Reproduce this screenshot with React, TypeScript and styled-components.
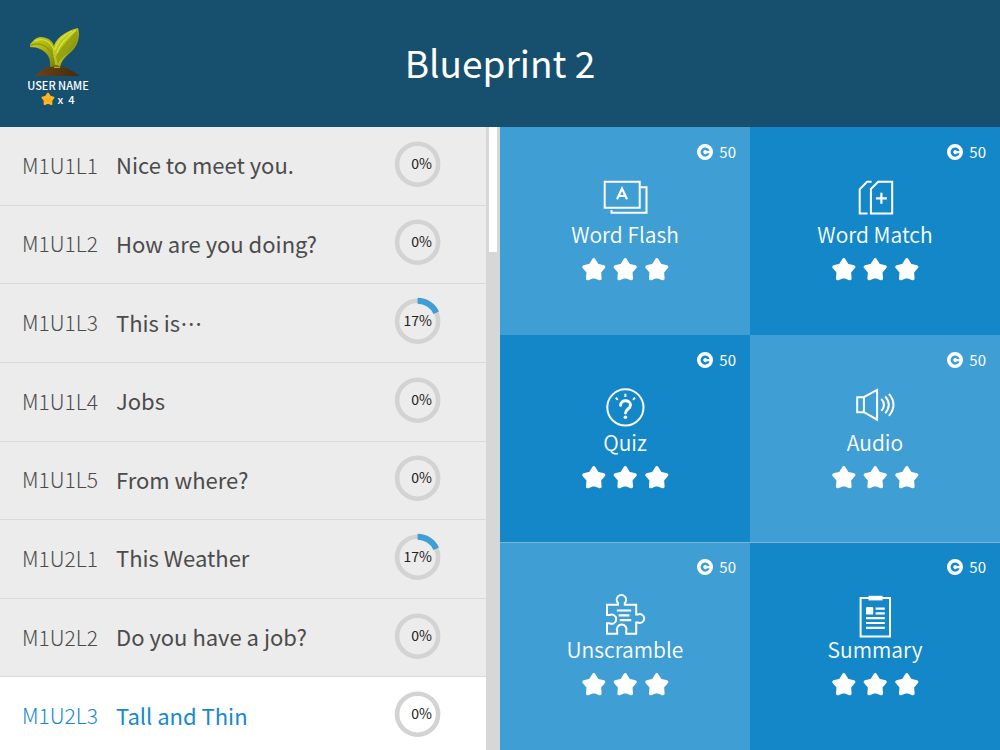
import React from 'react';
import styled, { createGlobalStyle } from 'styled-components';

const GlobalStyle = createGlobalStyle`
  *, *::before, *::after { box-sizing: border-box; }
  body {
    margin: 0;
    font-family: "Noto Sans CJK TC", "Noto Sans", sans-serif;
    color: #4b4b4b;
  }
  button { font: inherit; color: inherit; border: 0; cursor: pointer; }
  ul { list-style: none; margin: 0; padding: 0; }
`;

const Page = styled.div`
  display: flex;
  flex-direction: column;
  height: 100vh;
  overflow: hidden;
`;

const Header = styled.header`
  display: grid;
  grid-template-columns: 1fr auto 1fr;
  align-items: center;
  flex: none;
  height: 127px;
  padding: 0 24px;
  background: #17506f;
  color: #fff;
`;

const Title = styled.h1`
  margin: 0;
  padding-bottom: 4px;
  font-size: 37px;
  line-height: 56px;
  font-weight: 400;
`;

const Profile = styled.div`
  display: flex;
  flex-direction: column;
  align-items: center;
  justify-self: start;
  width: 68px;
  padding-top: 4px;
  font-size: 11px;
  font-weight: 500;
  line-height: 14px;
  white-space: nowrap;
`;

const Score = styled.span`
  display: flex;
  align-items: center;
  gap: 2px;
`;

const Main = styled.main`
  display: grid;
  grid-template-columns: 1fr 1fr;
  flex: 1;
  min-height: 0;
`;

const LessonPanel = styled.section`
  display: grid;
  grid-template-columns: 1fr 14px;
  min-height: 0;
  overflow: hidden;
`;

const LessonList = styled.ul`
  display: grid;
  grid-template-rows: repeat(8, minmax(72px, 1fr));
  height: calc(100% + 6px);
`;

const LessonItem = styled.li`
  display: grid;
  border-bottom: 1px solid #d9d9d9;
`;

const Lesson = styled.button<{ $active?: boolean }>`
  display: grid;
  grid-template-columns: 94px 1fr 46px;
  align-items: center;
  width: 100%;
  padding: 0 45px 4px 22px;
  background: ${p => (p.$active ? '#fff' : '#ececec')};
  color: ${p => (p.$active ? '#1589d0' : '#4b4b4b')};
  font-size: 22px;
  line-height: 32px;
  text-align: left;
`;

const Code = styled.span`
  padding-top: 2px;
  font-size: 21px;
  font-weight: 300;
`;

const Name = styled.span`
  padding-top: 1px;
  font-weight: 400;
`;

const Progress = styled.span`
  display: grid;
  align-items: center;
  width: 46px;
  height: 46px;
  color: #222;
  font-size: 14px;
  line-height: 20px;

  > * { grid-area: 1 / 1; }
`;

const Percent = styled.span`
  padding: 0 9px 2px 0;
  text-align: right;
`;

const ScrollTrack = styled.div`
  padding: 0 3px;
  background: #d7d7d7;
`;

const ScrollThumb = styled.div`
  height: 20%;
  background: #fff;
`;

const Activities = styled.section`
  display: grid;
  grid-template-columns: 1fr 1fr;
  grid-template-rows: repeat(3, 1fr);
`;

const Tile = styled.button<{ $dark?: boolean; $ruled?: boolean }>`
  display: flex;
  flex-direction: column;
  align-items: center;
  justify-content: flex-start;
  padding: 15px 14px 0;
  background: ${p => (p.$dark ? '#1487c8' : '#3f9ed3')};
  box-shadow: ${p => (p.$ruled ? 'inset 0 1px #7fb3d2' : 'none')};
  color: #fff;
`;

const Credit = styled.span`
  display: flex;
  align-items: center;
  align-self: flex-end;
  gap: 6px;
  margin-bottom: 17px;
  font-size: 15px;
  line-height: 20px;
`;

const TileName = styled.span`
  margin-bottom: 12px;
  font-size: 21px;
  font-weight: 350;
  line-height: 22px;
`;

function starPoints(cx: number, cy: number, outer: number, inner: number) {
  return Array.from({ length: 10 }, (_, i) => {
    const r = i % 2 ? inner : outer;
    const a = (i * Math.PI) / 5 - Math.PI / 2;
    return `${(cx + r * Math.cos(a)).toFixed(2)},${(cy + r * Math.sin(a)).toFixed(2)}`;
  }).join(' ');
}

function Stars() {
  return (
    <svg width="88" height="24" viewBox="0 0 88 24" fill="#fff" stroke="#fff" strokeWidth="3.4" strokeLinejoin="round" role="img" aria-label="3 stars">
      {[12.8, 44.2, 75.8].map(x => (
        <polygon key={x} points={starPoints(x, 13.2, 10.4, 5.9)} />
      ))}
    </svg>
  );
}

function Ring({ value }: { value: number }) {
  const length = 2 * Math.PI * 20.5;
  return (
    <svg width="46" height="46" viewBox="0 0 46 46" fill="none" overflow="visible" aria-hidden="true">
      <circle cx="22.6" cy="23.2" r="20.5" stroke="#d3d3d3" strokeWidth="4.6" />
      {value > 0 && (
        <circle cx="22.6" cy="23.2" r="20.5" stroke="#3f9ed3" strokeWidth="6" strokeDasharray={`${(length * (value + 1)) / 100} ${length}`} transform="rotate(-90 22.6 23.2)" />
      )}
    </svg>
  );
}

function CoinIcon() {
  return (
    <svg width="16" height="16" viewBox="0 0 16 16" aria-hidden="true">
      <path fill="#fff" fillRule="evenodd" d="M8 0a8 8 0 1 0 0 16A8 8 0 0 0 8 0ZM12.6 6.9H9.9A2 2 0 1 0 9.9 9.2H12.6A4.6 4.6 0 1 1 12.6 6.9Z" />
    </svg>
  );
}

function Sprout() {
  return (
    <svg width="56" height="52" viewBox="0 0 56 52" aria-hidden="true">
      <defs>
        <linearGradient id="leafRight" x1="0" y1="0" x2="1" y2="1">
          <stop offset="0.2" stopColor="#c3d020" />
          <stop offset="0.55" stopColor="#b4bd17" />
          <stop offset="0.8" stopColor="#6f7a08" />
        </linearGradient>
        <linearGradient id="leafLeft" x1="0" y1="0" x2="1" y2="1">
          <stop offset="0" stopColor="#c9d32b" />
          <stop offset="0.5" stopColor="#a9b312" />
          <stop offset="1" stopColor="#76800a" />
        </linearGradient>
        <linearGradient id="soil" x1="0" y1="0" x2="1" y2="0">
          <stop offset="0" stopColor="#6b4315" />
          <stop offset="1" stopColor="#452b12" />
        </linearGradient>
      </defs>
      <g transform="translate(-4 0)">
        <path d="M9 50C14 45 20 40 29 39.500C39 39.500 46 45 53 49Q53 50 52 50Z" fill="url(#soil)" />
        <path d="M24 41C25 33 22 27 15 23.500C10 21 6 21 1 21C7 16 8 12 14 11C23 11 29 16 29 25C31 31 31 37 30 41Z" fill="url(#leafLeft)" />
        <path d="M28 42C31 36 26 31 27 24C28 13 39 5 52 2C54 9 53 19 45 26C39 31 35 35 34 42Z" fill="url(#leafRight)" />
        <path d="M30 31C34 21 43 14 51 4C54 14 49 21 42 27C37 31 33 34 32 39Z" fill="#7d880c" opacity=".55" />
        <path d="M31 27C34 17 42 10 50 4M29 24C31 15 38 9 46 5" fill="none" stroke="#dbe24c" strokeWidth="1.2" />
        <path d="M3 20C12 15 22 19 27 30" fill="none" stroke="#8d970f" strokeWidth="1.3" />
        <path d="M9 15C18 11 25 16 28 24" fill="none" stroke="#d6de43" strokeWidth="1.2" />
        <path d="M24 41C28 38 31 38 34 41Z" fill="#7c6c10" />
      </g>
    </svg>
  );
}

function GoldStar() {
  return (
    <svg width="14" height="14" viewBox="0 0 14 14" aria-hidden="true">
      <polygon points={starPoints(7, 7.4, 5.9, 3.6)} fill="#ffb61e" stroke="#ffb61e" strokeWidth="1.8" strokeLinejoin="round" />
      <path d="M5 6v1M9 6v1M6 9h2" stroke="#e8961a" strokeWidth="1" />
    </svg>
  );
}

const icons: Record<string, React.ReactNode> = {
  flash: (
    <>
      <path d="M3.7 2.8h35v26h-35z" />
      <path d="M39.5 8.3h6v25.5H10.5V31" />
      <path d="M16 20.3 21 9.5 26 20.3M17.8 17h6.4" strokeWidth="2.2" />
    </>
  ),
  match: (
    <>
      <path d="M27.2 2.8H41.2V34.4H19.9V10z" />
      <path d="M20.6 2.8H16L8.7 10.3V34.4H16.6" />
      <path d="M30.4 13.8v11M24.9 19.3h11" strokeWidth="2.2" />
    </>
  ),
  quiz: (
    <>
      <circle cx="24.4" cy="20.4" r="18.1" />
      <path d="M24.4 6.8v3.3M14.8 10.6l2 2.2M34 10.6l-2 2.2" strokeWidth="2" />
      <path d="M19.6 18.4c0-6.4 9.9-6 9.9-.4 0 4-5 4-5 8" strokeWidth="2.9" strokeLinecap="round" />
      <circle cx="24.4" cy="30.3" r="1.8" fill="#fff" stroke="none" />
    </>
  ),
  audio: (
    <>
      <path d="M6.2 10.2h6.7v15H6.2zM12.9 10.2 26.1 2.9v29.8l-13.2-7.5" />
      <path d="M30.3 11.9q5.4 6 0 12M34.2 9.3q7.2 8.5 0 17M38 6.8q9 11 0 22" />
    </>
  ),
  puzzle: (
    <>
      <path d="M6 10.8H17V9A4.7 4.7 0 1 1 23.8 9V10.8H35.2V20.6H36.8A4.4 4.4 0 1 1 36.8 28.4H35.2V39.8H25.2V37A4.8 4.8 0 1 0 16.2 37V39.8H6V29.3H8.6A4.6 4.6 0 1 0 8.6 21H6Z" />
      <path d="M15.8 16.5h14.4M17.6 21.4h10.8M18.8 26.2h11.4" strokeWidth="2.2" />
    </>
  ),
  summary: (
    <>
      <path d="M9.6 4h29.4v38.6H9.6z" />
      <path d="M17.5 1.8h14v4.6h-14z" fill="#fff" stroke="none" />
      <rect x="15" y="13" width="7.2" height="7.6" rx="1.2" fill="#fff" stroke="none" />
      <path d="M24.6 14.6h9.2M24.6 19.4h9.2M15 24.2h18.8M15 29h18.8M15 33.8h18.8" strokeWidth="2.2" />
    </>
  ),
};

function ActivityIcon({ name }: { name: string }) {
  return (
    <svg width="48" height="44" viewBox="0 0 48 44" fill="none" stroke="#fff" strokeWidth="2" aria-hidden="true">
      {icons[name]}
    </svg>
  );
}

const lessons = [
  { code: 'M1U1L1', name: 'Nice to meet you.', progress: 0 },
  { code: 'M1U1L2', name: 'How are you doing?', progress: 0 },
  { code: 'M1U1L3', name: 'This is…', progress: 17 },
  { code: 'M1U1L4', name: 'Jobs', progress: 0 },
  { code: 'M1U1L5', name: 'From where?', progress: 0 },
  { code: 'M1U2L1', name: 'This Weather', progress: 17 },
  { code: 'M1U2L2', name: 'Do you have a job?', progress: 0 },
  { code: 'M1U2L3', name: 'Tall and Thin', progress: 0, active: true },
];

const activities = [
  { name: 'Word Flash', icon: 'flash' },
  { name: 'Word Match', icon: 'match', dark: true },
  { name: 'Quiz', icon: 'quiz', dark: true },
  { name: 'Audio', icon: 'audio' },
  { name: 'Unscramble', icon: 'puzzle', ruled: true },
  { name: 'Summary', icon: 'summary', dark: true, ruled: true },
];

export default function App() {
  return (
    <>
      <GlobalStyle />
      <Page>
        <Header>
          <Profile>
            <Sprout />
            <span>USER NAME</span>
            <Score>
              <GoldStar />
              x&nbsp; 4
            </Score>
          </Profile>
          <Title>Blueprint 2</Title>
        </Header>
        <Main>
          <LessonPanel>
            <LessonList>
              {lessons.map(lesson => (
                <LessonItem key={lesson.code}>
                  <Lesson type="button" $active={lesson.active}>
                    <Code>{lesson.code}</Code>
                    <Name lang="zh-TW">{lesson.name}</Name>
                    <Progress>
                      <Ring value={lesson.progress} />
                      <Percent>{lesson.progress}%</Percent>
                    </Progress>
                  </Lesson>
                </LessonItem>
              ))}
            </LessonList>
            <ScrollTrack>
              <ScrollThumb />
            </ScrollTrack>
          </LessonPanel>
          <Activities>
            {activities.map(activity => (
              <Tile key={activity.name} type="button" $dark={activity.dark} $ruled={activity.ruled}>
                <Credit>
                  <CoinIcon />
                  50
                </Credit>
                <ActivityIcon name={activity.icon} />
                <TileName>{activity.name}</TileName>
                <Stars />
              </Tile>
            ))}
          </Activities>
        </Main>
      </Page>
    </>
  );
}
